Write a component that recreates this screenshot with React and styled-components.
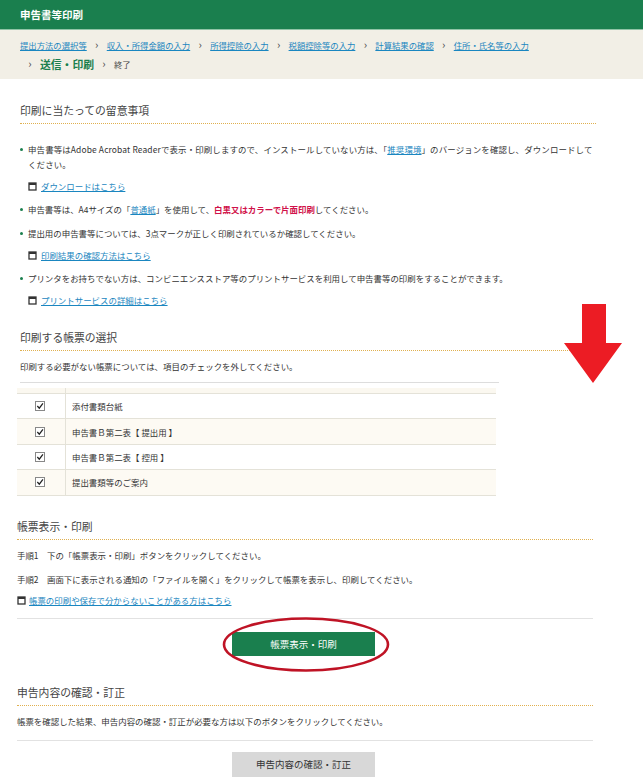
import React from 'react';
import styled, { createGlobalStyle } from 'styled-components';

const forms = [
  { name: '添付書類台紙' },
  { name: '申告書Ｂ第二表【 提出用 】', shaded: true },
  { name: '申告書Ｂ第二表【 控用 】' },
  { name: '提出書類等のご案内', shaded: true },
];

const crumbs = [
  '提出方法の選択等',
  '収入・所得金額の入力',
  '所得控除の入力',
  '税額控除等の入力',
  '計算結果の確認',
  '住所・氏名等の入力',
];

function WindowIcon() {
  return (
    <IconSvg viewBox="0 0 9 9">
      <rect x="1" y="1" width="7" height="7" fill="#fff" stroke="#333" strokeWidth="1.3" />
      <rect x="1" y="1" width="7" height="2" fill="#333" />
    </IconSvg>
  );
}

function App() {
  return (
    <Page>
      <GlobalStyle />
      <Header>申告書等印刷</Header>
      <Breadcrumb>
        <CrumbRow>
          {crumbs.map((c, i) => (
            <React.Fragment key={c}>
              {i > 0 && <Sep>›</Sep>}
              <Link href="#">{c}</Link>
            </React.Fragment>
          ))}
        </CrumbRow>
        <CrumbRow>
          <Sep>›</Sep>
          <Current>送信・印刷</Current>
          <Sep>›</Sep>
          <Last>終了</Last>
        </CrumbRow>
      </Breadcrumb>

      <Notes>
        <Heading>印刷に当たっての留意事項</Heading>
        <NoteList>
          <Note $spread="0.13px">
            申告書等はAdobe Acrobat Readerで表示・印刷しますので、インストールしていない方は、「<Link href="#">推奨環境</Link>」のバージョンを確認し、ダウンロードして<br />ください。
            <SubLink><WindowIcon /><Link href="#">ダウンロードはこちら</Link></SubLink>
          </Note>
          <Note $plain>
            申告書等は、A4サイズの「<Link href="#">普通紙</Link>」を使用して、<Warn>白黒又はカラーで片面印刷</Warn>してください。
          </Note>
          <Note>
            提出用の申告書等については、3点マークが正しく印刷されているか確認してください。
            <SubLink><WindowIcon /><Link href="#">印刷結果の確認方法はこちら</Link></SubLink>
          </Note>
          <Note>
            プリンタをお持ちでない方は、コンビニエンスストア等のプリントサービスを利用して申告書等の印刷をすることができます。
            <SubLink><WindowIcon /><Link href="#">プリントサービスの詳細はこちら</Link></SubLink>
          </Note>
        </NoteList>
      </Notes>

      <Select>
        <Heading>印刷する帳票の選択</Heading>
        <Text>印刷する必要がない帳票については、項目のチェックを外してください。</Text>
        <TableRule />
        <Table>
          <HeadRow><CheckCell /><NameCell /></HeadRow>
          {forms.map((f) => (
            <Row key={f.name} $shaded={f.shaded}>
              <CheckCell>
                <CheckBox>
                  <svg viewBox="0 0 9 9" width="8" height="8">
                    <path d="M1.5 4.5 L3.7 7 L7.8 1.5" fill="none" stroke="#222" strokeWidth="1.4" />
                  </svg>
                </CheckBox>
              </CheckCell>
              <NameCell>{f.name}</NameCell>
            </Row>
          ))}
        </Table>
      </Select>

      <Lower>
        <Heading>帳票表示・印刷</Heading>
        <Text>手順1　下の「帳票表示・印刷」ボタンをクリックしてください。</Text>
        <Text $gap="9px">手順2　画面下に表示される通知の「ファイルを開く」をクリックして帳票を表示し、印刷してください。</Text>
        <HelpLink><WindowIcon /><Link href="#">帳票の印刷や保存で分からないことがある方はこちら</Link></HelpLink>
        <Rule />
        <ButtonRow>
          <PrintArea>
            <GreenButton>帳票表示・印刷</GreenButton>
            <Ellipse viewBox="0 0 168 55">
              <ellipse cx="84" cy="27.5" rx="82" ry="26" fill="none" stroke="#bf1325" strokeWidth="2.6" />
            </Ellipse>
          </PrintArea>
        </ButtonRow>

        <Heading $top="26px">申告内容の確認・訂正</Heading>
        <Text>帳票を確認した結果、申告内容の確認・訂正が必要な方は以下のボタンをクリックしてください。</Text>
        <Rule $top="11px" />
        <ButtonRow $top="11px">
          <GrayButton>申告内容の確認・訂正</GrayButton>
        </ButtonRow>
      </Lower>

      <Arrow viewBox="0 0 58 79">
        <path d="M18 0 H42 V39 H58 L29 79 L0 39 H18 Z" fill="#ec1c24" />
      </Arrow>
    </Page>
  );
}

const GlobalStyle = createGlobalStyle`
  html, body {
    margin: 0;
    background: #fff;
  }
  body {
    font-family: "Noto Sans CJK JP", "Liberation Sans", sans-serif;
    color: #333;
    font-size: 8.45px;
  }
`;

const Page = styled.div`
  position: relative;
  width: 643px;
  height: 784px;
  overflow: hidden;
`;

const Header = styled.div`
  height: 29px;
  padding-left: 20px;
  background: #1a7f4e;
  border-bottom: 1px solid #8fc4a6;
  color: #fff;
  font-size: 10.5px;
  font-weight: 700;
  line-height: 30px;
`;

const Breadcrumb = styled.div`
  height: 49px;
  padding: 5px 0 0 20px;
  box-sizing: border-box;
  background: #f2efe6;
`;

const CrumbRow = styled.div`
  display: flex;
  align-items: center;
  height: 19px;
  font-size: 8.35px;
`;

const Sep = styled.span`
  width: 20px;
  text-align: center;
  color: #444;
  font-size: 11px;
  line-height: 1;
`;

const Link = styled.a`
  color: #1a86c0;
  text-decoration: underline;
`;

const Current = styled.span`
  color: #1a7f4e;
  font-size: 10.8px;
  font-weight: 700;
`;

const Last = styled.span`
  color: #444;
`;

const Notes = styled.section`
  padding: 21px 47px 0 20px;
`;

const Heading = styled.h2`
  margin: ${(p) => p.$top || '0'} 0 0;
  padding-bottom: 3px;
  height: 20px;
  box-sizing: content-box;
  border-bottom: 1px dotted #e0b04f;
  color: #444;
  font-size: 10.8px;
  font-weight: 400;
  line-height: 20px;
`;

const NoteList = styled.ul`
  margin: 18px 0 0;
  padding: 0;
  list-style: none;
`;

const Note = styled.li`
  position: relative;
  padding-left: 8px;
  margin-bottom: ${(p) => (p.$plain ? '9px' : '8px')};
  line-height: 15px;
  letter-spacing: ${(p) => p.$spread || 'normal'};

  &::before {
    content: '';
    position: absolute;
    left: 0;
    top: 6px;
    width: 3px;
    height: 3px;
    border-radius: 50%;
    background: #1a7f4e;
  }
`;

const SubLink = styled.div`
  display: flex;
  align-items: center;
  gap: 4px;
  margin-top: 7px;
  letter-spacing: normal;
`;

const IconSvg = styled.svg`
  width: 9px;
  height: 9px;
  flex: none;
`;

const Warn = styled.strong`
  color: #d0114a;
`;

const Select = styled.section`
  padding: 11px 47px 0 20px;
`;

const Text = styled.p`
  margin: ${(p) => p.$gap || '8px'} 0 0;
  line-height: 15px;
`;

const TableRule = styled.div`
  width: 479px;
  margin-top: 8px;
  border-top: 1px solid #ddd;
`;

const Table = styled.div`
  width: 479px;
  margin: 5px 0 0 -3px;
`;

const HeadRow = styled.div`
  display: grid;
  grid-template-columns: 49px 1fr;
  height: 5px;
  background: #fbf8f0;
  border-bottom: 1px solid #e4e2d8;
`;

const Row = styled.div`
  display: grid;
  grid-template-columns: 49px 1fr;
  box-sizing: border-box;
  height: 25.4px;
  align-items: stretch;
  background: ${(p) => (p.$shaded ? '#fdfaf3' : '#fff')};
  border-bottom: 1px solid #e4e2d8;
`;

const CheckCell = styled.div`
  display: flex;
  align-items: center;
  justify-content: center;
  padding-right: 3px;
  border-right: 1px solid #e4e2d8;
`;

const NameCell = styled.div`
  display: flex;
  align-items: center;
  padding-left: 6px;
`;

const CheckBox = styled.span`
  display: flex;
  align-items: center;
  justify-content: center;
  width: 8px;
  height: 8px;
  background: #fff;
  border: 1px solid #888;
`;

const Lower = styled.section`
  padding: 20px 50px 0 17px;
`;

const HelpLink = styled.div`
  display: flex;
  align-items: center;
  gap: 3px;
  margin-top: 6px;
  line-height: 15px;
`;

const Rule = styled.div`
  margin-top: ${(p) => p.$top || '10px'};
  border-top: 1px solid #e2e2e2;
`;

const ButtonRow = styled.div`
  display: flex;
  justify-content: center;
  margin-top: ${(p) => p.$top || '13px'};
  padding-right: 3px;
`;

const PrintArea = styled.div`
  position: relative;
`;

const GreenButton = styled.button`
  display: block;
  width: 143px;
  height: 24px;
  padding: 0;
  border: 0;
  background: #1a7f4e;
  color: #fff;
  font: 400 9.5px "Noto Sans CJK JP", sans-serif;
`;

const GrayButton = styled(GreenButton)`
  height: 25px;
  background: #d8d8d8;
  color: #333;
`;

const Ellipse = styled.svg`
  position: absolute;
  left: -10px;
  top: -15px;
  width: 168px;
  height: 55px;
  pointer-events: none;
`;

const Arrow = styled.svg`
  position: absolute;
  left: 564px;
  top: 304px;
  width: 58px;
  height: 79px;
`;

export default App;
